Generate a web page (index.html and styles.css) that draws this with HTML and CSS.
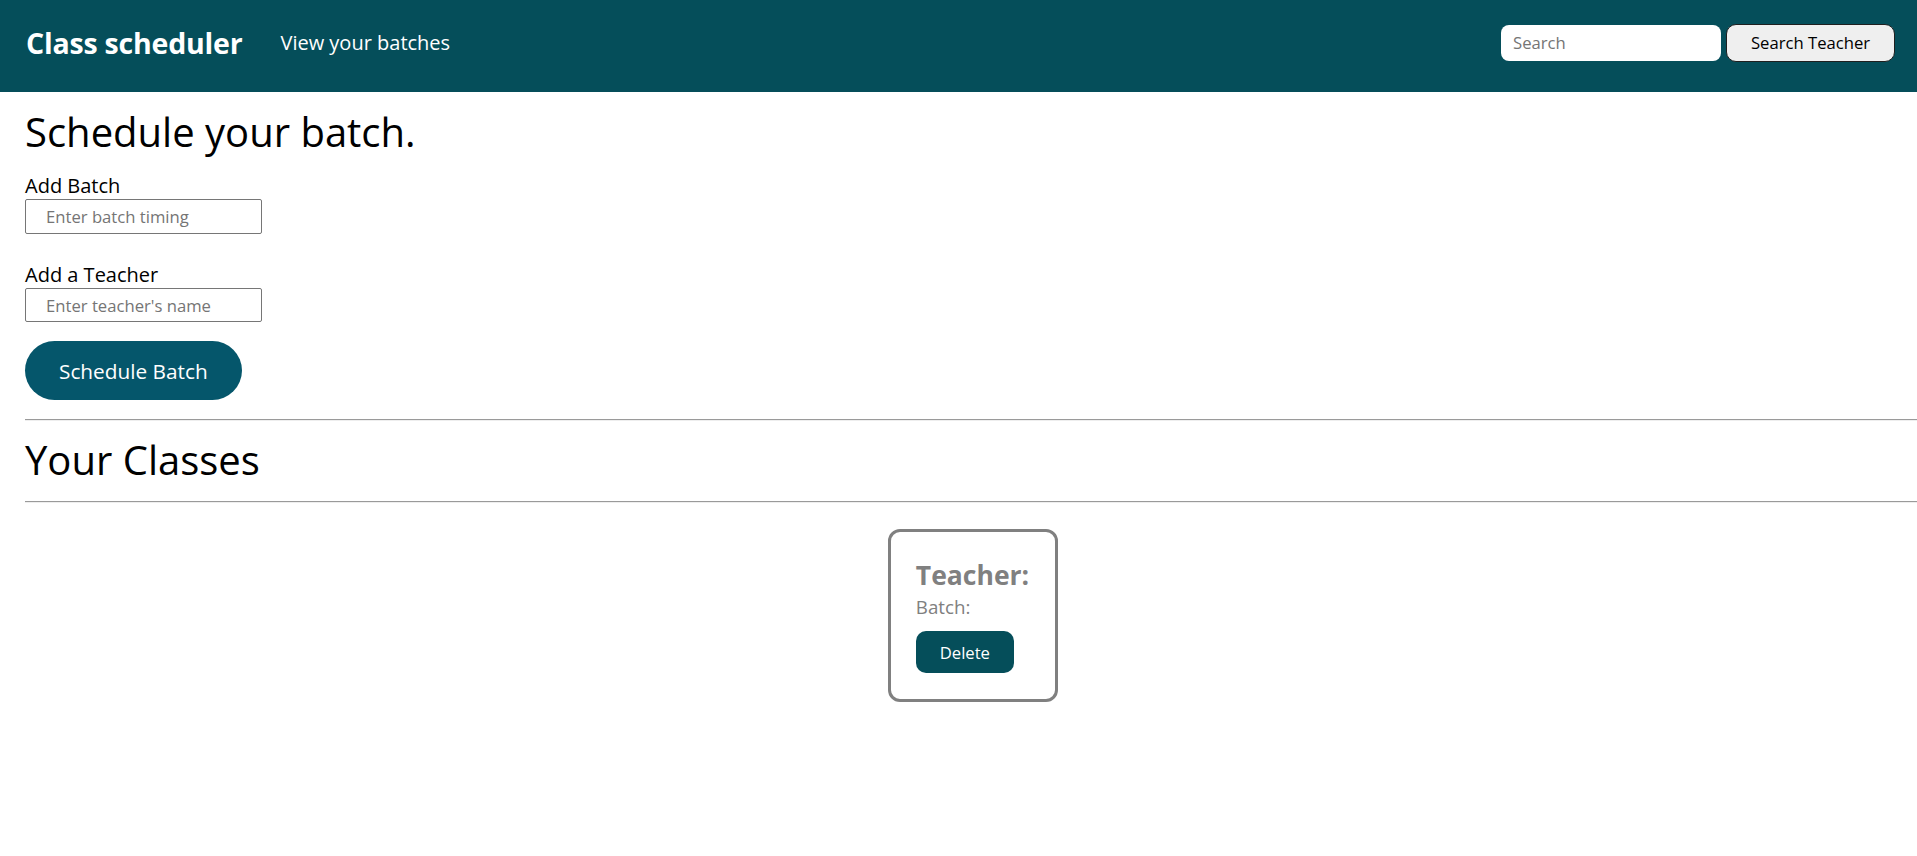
FILE: index.html
```html
<!DOCTYPE html>
<html lang="en">
<head>
<meta charset="utf-8">
<title>Class scheduler</title>
<link rel="stylesheet" href="styles.css">
</head>
<body>
<header class="topbar">
  <div class="brand">Class scheduler</div>
  <a class="nav-link" href="#">View your batches</a>
  <form class="search">
    <input class="search-input" type="text" placeholder="Search">
    <button class="search-btn" type="button">Search Teacher</button>
  </form>
</header>
<main class="main">
  <h1 class="page-title">Schedule your batch.</h1>
  <label class="field-label" for="batch">Add Batch</label>
  <input class="field-input" id="batch" type="text" placeholder="Enter batch timing">
  <label class="field-label field-label-gap" for="teacher">Add a Teacher</label>
  <input class="field-input field-input-short" id="teacher" type="text" placeholder="Enter teacher's name">
  <button class="primary-btn" type="button">Schedule Batch</button>
  <hr class="divider divider-first">
  <h2 class="section-title">Your Classes</h2>
  <hr class="divider divider-second">
  <div class="cards">
    <div class="card">
      <div class="card-teacher">Teacher:</div>
      <div class="card-batch">Batch:</div>
      <button class="delete-btn" type="button">Delete</button>
    </div>
  </div>
</main>
</body>
</html>
```
FILE: styles.css
```css
* { box-sizing: border-box; }
html, body { margin: 0; padding: 0; background: #fff; }
body {
  font-family: "Open Sans", "Noto Sans", sans-serif;
  color: #000;
  overflow-x: hidden;
}
.topbar {
  height: 92px;
  background: #054e5a;
  display: flex;
  align-items: center;
  padding: 0 22px 7px 26px;
}
.brand {
  color: #fff;
  font-weight: 700;
  font-size: 28.5px;
  line-height: 38px;
  letter-spacing: -0.2px;
}
.nav-link {
  color: #fff;
  text-decoration: none;
  font-size: 20px;
  line-height: 27px;
  margin-left: 38px;
}
.search {
  margin: 0 0 0 auto;
  display: flex;
  align-items: center;
  gap: 5px;
}
.search-input {
  width: 220px;
  height: 36px;
  border: none;
  border-radius: 8px;
  background: #fff;
  padding: 0 12px;
  font-family: inherit;
  font-size: 16.67px;
  color: #000;
  outline: none;
}
.search-input::placeholder { color: #757575; }
.search-btn {
  width: 169px;
  height: 38px;
  border: 1px solid #1f1f1f;
  border-radius: 10px;
  background: #efefef;
  font-family: inherit;
  font-size: 16.67px;
  color: #000;
  padding: 0;
}
.main {
  padding: 0 0 0 25px;
}
.page-title {
  margin: 13px 0 0;
  font-size: 40px;
  line-height: 54px;
  font-weight: 400;
}
.field-label {
  display: block;
  margin-top: 13px;
  font-size: 20px;
  line-height: 27px;
}
.field-label-gap { margin-top: 27px; }
.field-input {
  display: block;
  width: 237px;
  height: 35px;
  border: 1px solid #767676;
  border-radius: 2px;
  padding: 0 0 0 20px;
  font-family: inherit;
  font-size: 16.67px;
  color: #000;
  outline: none;
}
.field-input-short { height: 34px; }
.field-input::placeholder { color: #757575; }
.primary-btn {
  display: block;
  margin-top: 19px;
  height: 59px;
  padding: 0 34px;
  border: none;
  border-radius: 30px;
  background: #05566b;
  color: #fff;
  font-family: inherit;
  font-size: 20.8px;
}
.divider {
  height: 0;
  margin: 0;
  border: none;
  border-top: 1px solid #9a9a9a;
  border-bottom: 1px solid #eeeeee;
}
.divider-first { margin-top: 19px; }
.section-title {
  margin: 12px 0 0;
  font-size: 40px;
  line-height: 54px;
  font-weight: 400;
}
.divider-second { margin-top: 14px; }
.cards {
  display: flex;
  justify-content: center;
  padding: 26px 0 0 4px;
}
.card {
  border: 3px solid #808080;
  border-radius: 12px;
  padding: 25px 26px 26px 25px;
  display: flex;
  flex-direction: column;
  align-items: flex-start;
}
.card-teacher {
  color: #808080;
  font-weight: 700;
  font-size: 26.5px;
  line-height: 37px;
}
.card-batch {
  color: #808080;
  font-size: 18.75px;
  line-height: 26px;
}
.delete-btn {
  margin-top: 11px;
  width: 98px;
  height: 42px;
  border: none;
  border-radius: 10px;
  background: #054e5a;
  color: #fff;
  font-family: inherit;
  font-size: 16.67px;
  padding: 0;
}
```
